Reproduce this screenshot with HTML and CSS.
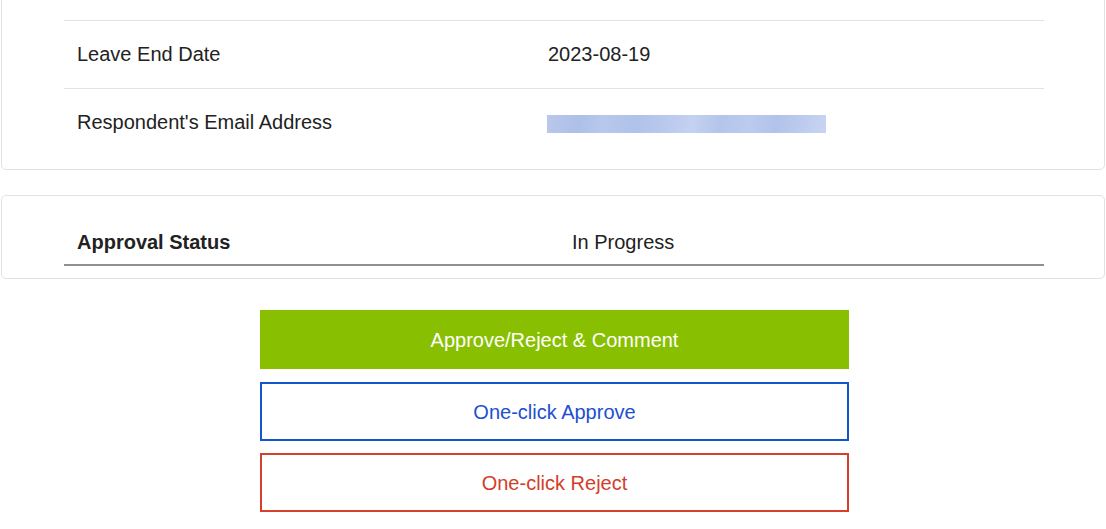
FILE: index.html
```html
<!DOCTYPE html>
<html lang="en">
<head>
<meta charset="utf-8">
<title>Leave Request</title>
<link rel="stylesheet" href="styles.css">
</head>
<body>
<div class="page">
  <section class="card card-details">
    <div class="row">
      <div class="cell label">Leave End Date</div>
      <div class="cell value">2023-08-19</div>
    </div>
    <div class="row">
      <div class="cell label">Respondent's Email Address</div>
      <div class="cell value"><span class="redacted"></span></div>
    </div>
  </section>

  <section class="card card-status">
    <div class="status-row">
      <div class="cell label strong">Approval Status</div>
      <div class="cell value">In Progress</div>
    </div>
  </section>

  <div class="actions">
    <button class="btn btn-primary" type="button">Approve/Reject &amp; Comment</button>
    <button class="btn btn-approve" type="button">One-click Approve</button>
    <button class="btn btn-reject" type="button">One-click Reject</button>
  </div>
</div>
</body>
</html>
```

FILE: styles.css
```css
* {
  box-sizing: border-box;
}

html, body {
  margin: 0;
  padding: 0;
  background: #ffffff;
  overflow: hidden;
}

body {
  font-family: "Liberation Sans", Arial, sans-serif;
  font-size: 20px;
  color: #222222;
}

.page {
  padding: 0 1px;
}

.card {
  border: 1px solid #e2e2e2;
  border-radius: 5px;
  background: #ffffff;
  padding: 0 60px 0 62px;
}

/* details card continues from above the fold */
.card-details {
  margin-top: -9px;
  padding-top: 28px;
  padding-bottom: 13px;
}

.row {
  display: grid;
  grid-template-columns: 471px 1fr;
  align-items: center;
  height: 68px;
  border-top: 1px solid #e3e3e3;
}

.cell {
  padding-left: 13px;
  line-height: 23px;
}

.redacted {
  display: block;
  width: 279px;
  height: 18px;
  margin: 3px 0 0 -1px;
  background: linear-gradient(100deg,
    #b9c8eb 0%, #adc0e9 12%, #b8c8ec 20%, #afc2ea 32%,
    #bccbee 45%, #c4d2f0 52%, #b3c5eb 62%,
    #bccbee 72%, #b1c3ea 82%, #c8d5f1 100%);
}

.card-status {
  margin-top: 25px;
  padding-top: 24px;
  padding-bottom: 12px;
}

.status-row {
  display: grid;
  grid-template-columns: 495px 1fr;
  align-items: center;
  height: 46px;
  border-bottom: 2px solid #8f8f8f;
}

.strong {
  font-weight: bold;
}

.actions {
  display: flex;
  flex-direction: column;
  width: 589px;
  margin: 31px 0 0 259px;
}

.btn {
  display: block;
  width: 100%;
  height: 59px;
  font-family: "Liberation Sans", Arial, sans-serif;
  font-size: 20px;
  background: #ffffff;
  border: 2px solid transparent;
  border-radius: 0;
  padding: 2px 0 0;
  cursor: pointer;
}

.btn-primary {
  background: #88bf00;
  border-color: #88bf00;
  color: #ffffff;
}

.btn-approve {
  margin-top: 13px;
  border-color: #1256cc;
  color: #1d4fd0;
}

.btn-reject {
  margin-top: 12px;
  border-color: #d63f2b;
  color: #d43d2a;
}
```
